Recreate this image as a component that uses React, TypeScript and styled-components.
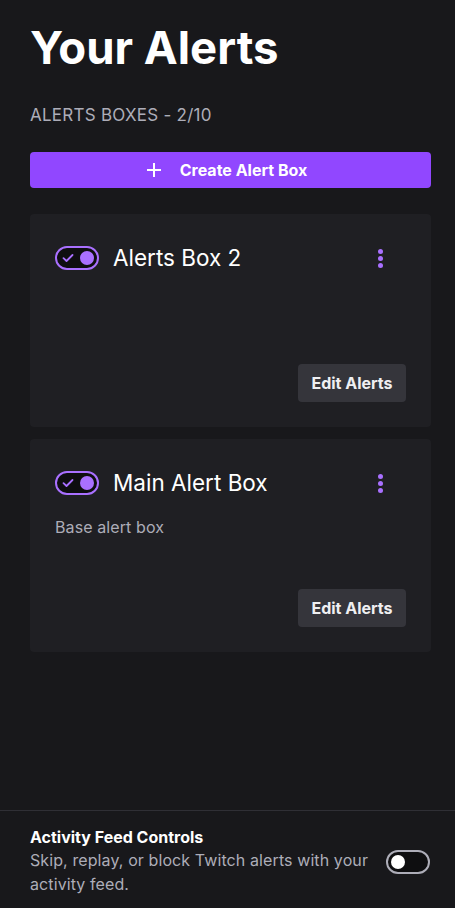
import styled, { createGlobalStyle } from 'styled-components';

const GlobalStyle = createGlobalStyle`
    html, body {
        margin: 0;
        padding: 0;
        background: #18181b;
    }
    body {
        font-family: Inter, "Noto Sans", sans-serif;
        color: #efeff1;
    }
    * { box-sizing: border-box; }
`

const Page = styled.div`
    display: flex;
    flex-direction: column;
    min-height: 100vh;
    background: #18181b;
`

const Main = styled.main`
    flex: 1;
    padding: 22px 24px 0 30px;
`

const Title = styled.h1`
    margin: 0;
    font-size: 45.5px;
    font-weight: 700;
    line-height: 52px;
    color: #ffffff;
`

const Counter = styled.div`
    margin-top: 30px;
    font-size: 17px;
    line-height: 22px;
    letter-spacing: 0.25px;
    color: #adadb8;
`

const CreateButton = styled.button`
    margin-top: 26px;
    width: 100%;
    height: 36px;
    display: flex;
    align-items: center;
    justify-content: center;
    gap: 18px;
    border: none;
    border-radius: 4px;
    background: #9147ff;
    color: #ffffff;
    font-family: inherit;
    font-size: 16px;
    font-weight: 700;
    padding: 0 8px 0 0;
`

const CardList = styled.div`
    margin-top: 26px;
    display: flex;
    flex-direction: column;
    gap: 12px;
`

const Card = styled.div`
    height: 213px;
    background: #1f1f23;
    border-radius: 4px;
    padding: 27px 25px 25px 25px;
    display: flex;
    flex-direction: column;
`

const CardHeader = styled.div`
    display: flex;
    align-items: center;
    height: 34px;
`

const CardName = styled.div`
    margin-left: 14px;
    flex: 1;
    font-size: 22.5px;
    line-height: 34px;
    color: #ffffff;
`

const MoreButton = styled.div`
    width: 20px;
    display: flex;
    flex-direction: column;
    align-items: center;
    gap: 2px;
    margin-right: 16px;
    span {
        width: 5px;
        height: 5px;
        border-radius: 50%;
        background: #a970ff;
    }
`

const Description = styled.div`
    margin-top: 17px;
    font-size: 16px;
    line-height: 20px;
    letter-spacing: 0.1px;
    color: #adadb8;
`

const CardFooter = styled.div`
    margin-top: auto;
    display: flex;
    justify-content: flex-end;
`

const EditButton = styled.button`
    width: 108px;
    height: 38px;
    border: none;
    border-radius: 4px;
    background: #35353b;
    color: #efeff1;
    font-family: inherit;
    font-size: 16px;
    font-weight: 700;
`

const Toggle = styled.div<{ $on?: boolean }>`
    position: relative;
    width: 44px;
    height: 24px;
    flex-shrink: 0;
    border-radius: 12px;
    border: 2px solid ${p => (p.$on ? '#a970ff' : '#adadb8')};
    background: #0e0e10;
`

const Knob = styled.span<{ $on?: boolean }>`
    position: absolute;
    top: 3px;
    ${p => (p.$on ? 'right: 3px;' : 'left: 3px;')}
    width: 14px;
    height: 14px;
    border-radius: 50%;
    background: ${p => (p.$on ? '#a970ff' : '#ffffff')};
`

const Check = styled.svg`
    position: absolute;
    left: 5px;
    top: 5px;
`

const Footer = styled.footer`
    border-top: 1px solid #2f2f35;
    padding: 16px 25px 12px 30px;
    display: flex;
    align-items: center;
    gap: 16px;
`

const FooterText = styled.div`
    flex: 1;
`

const FooterTitle = styled.div`
    font-size: 16px;
    font-weight: 700;
    line-height: 20px;
    color: #ffffff;
`

const FooterDesc = styled.div`
    margin-top: 1px;
    font-size: 16px;
    line-height: 24px;
    letter-spacing: 0.1px;
    color: #adadb8;
`

const Switch = ({ on }: { on?: boolean }) => (
    <Toggle $on={on}>
        {on && (
            <Check width="12" height="10" viewBox="0 0 12 10">
                <path d="M1.5 5.2 L4.5 8 L10.5 2" fill="none" stroke="#a970ff" strokeWidth="1.8" strokeLinecap="round" strokeLinejoin="round" />
            </Check>
        )}
        <Knob $on={on} />
    </Toggle>
)

const boxes = [
    { name: 'Alerts Box 2', description: '' },
    { name: 'Main Alert Box', description: 'Base alert box' },
]

const App = () => {
    return (
        <Page>
            <GlobalStyle />
            <Main>
                <Title>Your Alerts</Title>
                <Counter>ALERTS BOXES - 2/10</Counter>
                <CreateButton>
                    <svg width="16" height="16" viewBox="0 0 16 16">
                        <path d="M8 1 V15 M1 8 H15" stroke="#ffffff" strokeWidth="2" />
                    </svg>
                    Create Alert Box
                </CreateButton>
                <CardList>
                    {boxes.map(box => (
                        <Card key={box.name}>
                            <CardHeader>
                                <Switch on />
                                <CardName>{box.name}</CardName>
                                <MoreButton>
                                    <span />
                                    <span />
                                    <span />
                                </MoreButton>
                            </CardHeader>
                            {box.description && <Description>{box.description}</Description>}
                            <CardFooter>
                                <EditButton>Edit Alerts</EditButton>
                            </CardFooter>
                        </Card>
                    ))}
                </CardList>
            </Main>
            <Footer>
                <FooterText>
                    <FooterTitle>Activity Feed Controls</FooterTitle>
                    <FooterDesc>Skip, replay, or block Twitch alerts with your activity feed.</FooterDesc>
                </FooterText>
                <Switch />
            </Footer>
        </Page>
    )
}

export default App;
